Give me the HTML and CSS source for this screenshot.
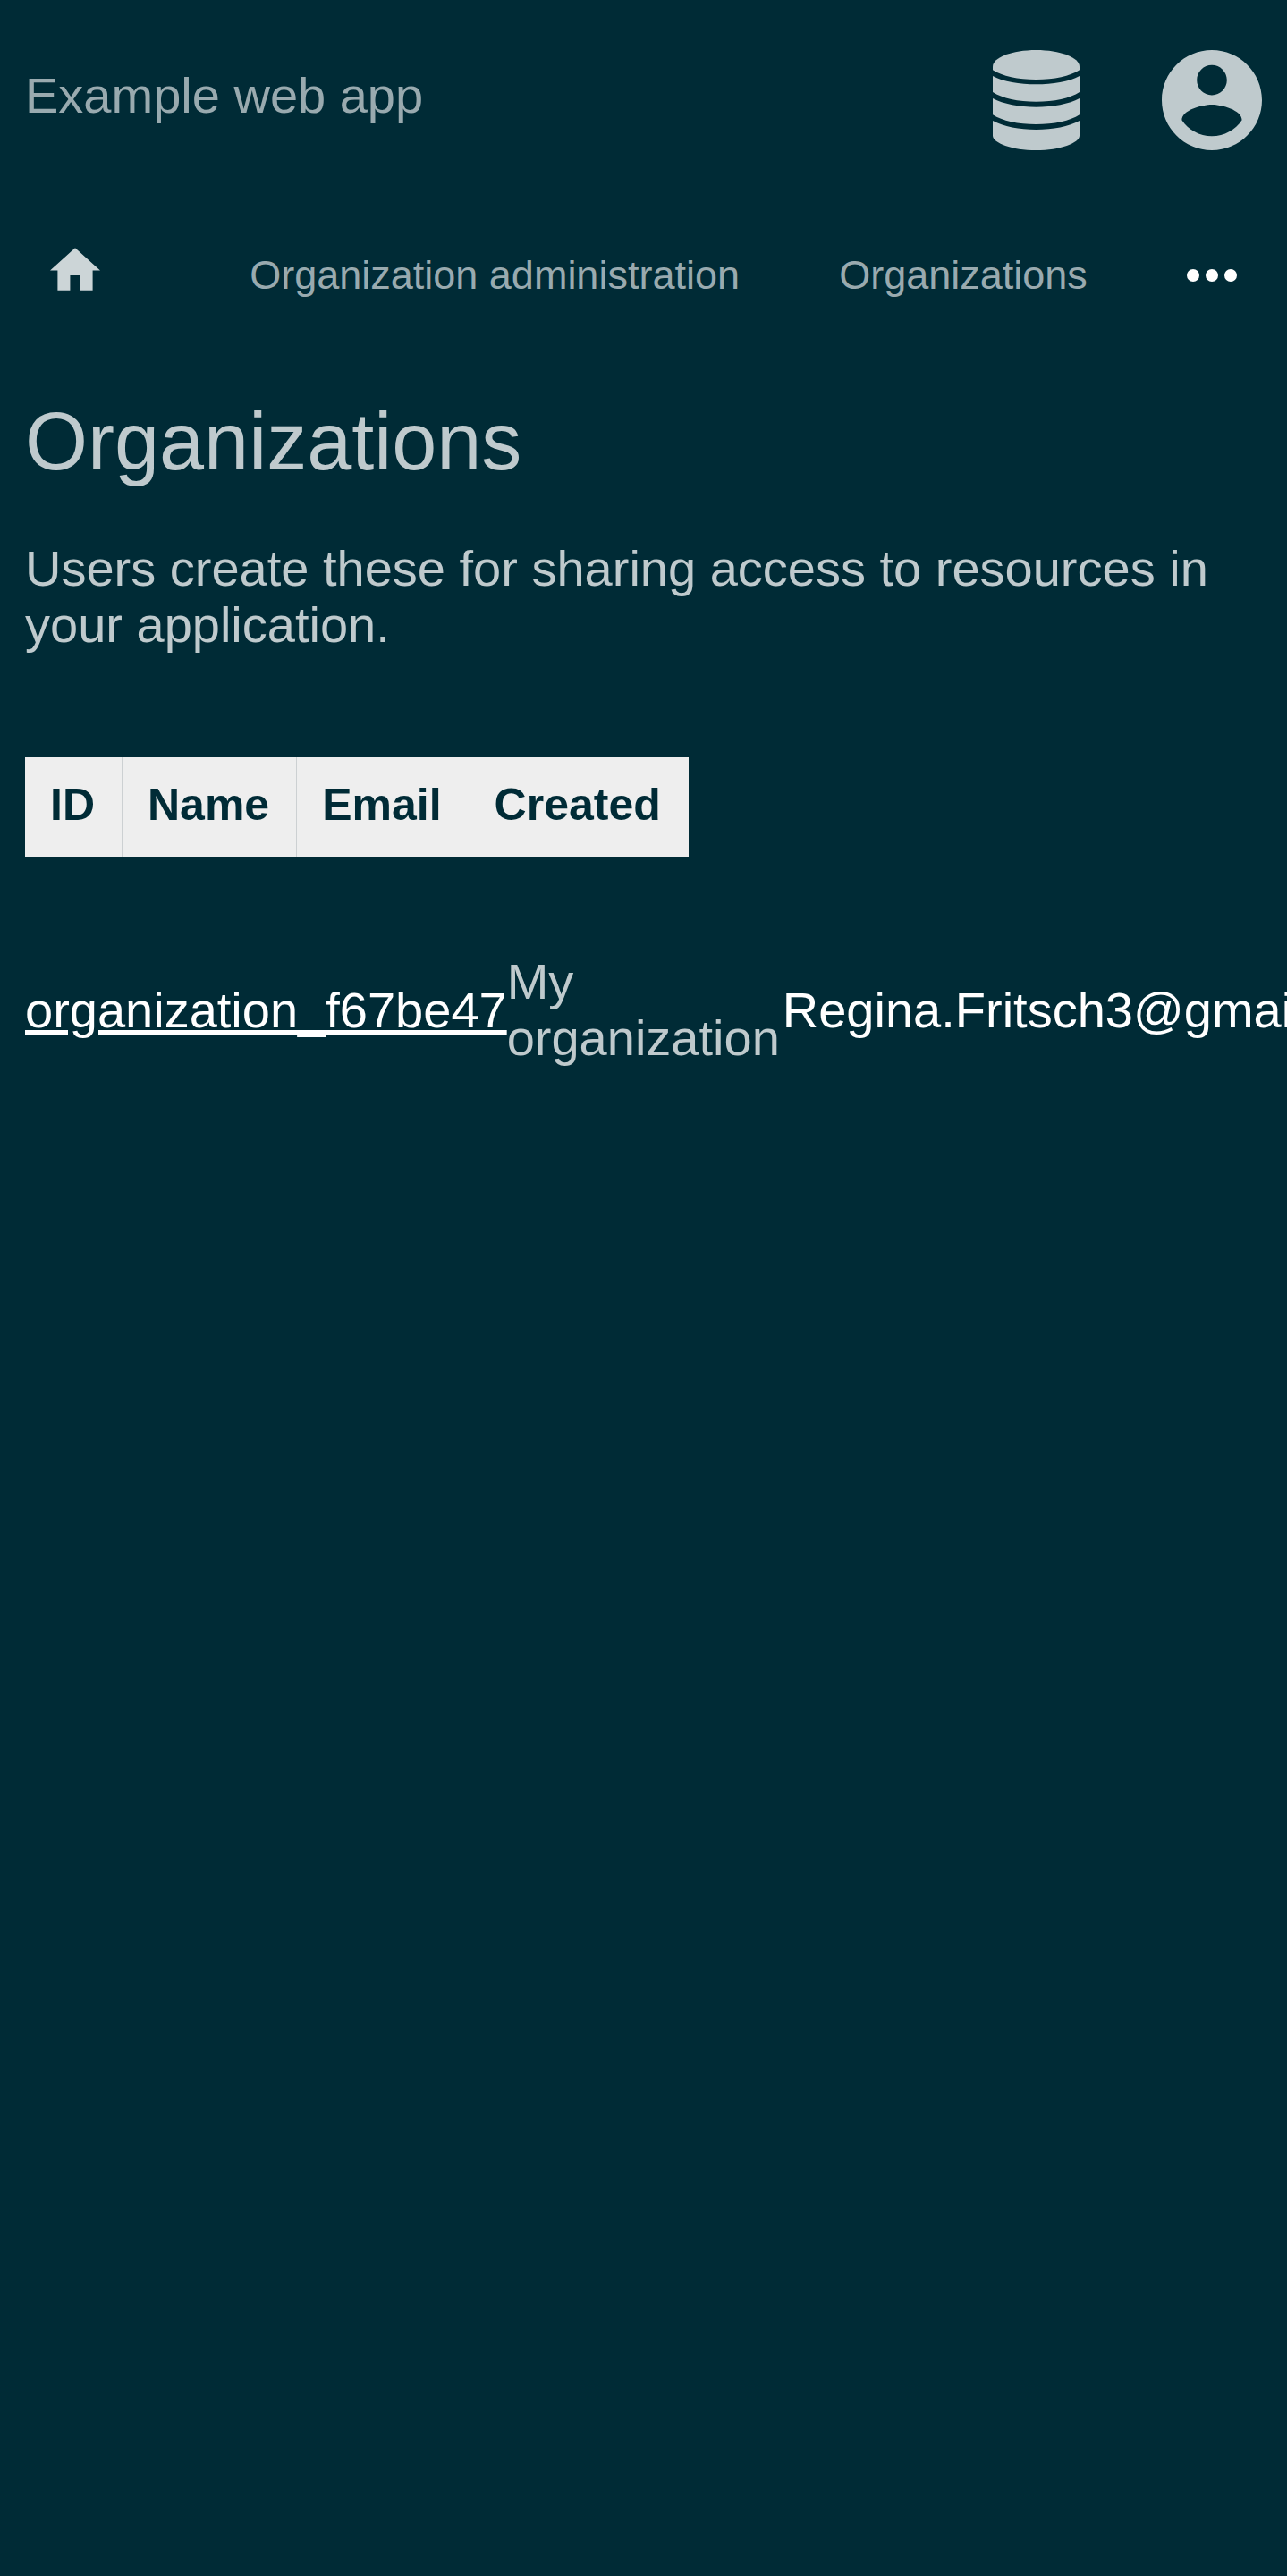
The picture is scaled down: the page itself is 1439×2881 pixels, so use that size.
FILE: index.html
```html
<!DOCTYPE html>
<html lang="en">
<head>
<meta charset="utf-8">
<meta name="viewport" content="width=device-width, initial-scale=1">
<title>Organizations</title>
<link rel="stylesheet" href="styles.css">
</head>
<body>
<header class="header">
  <a class="brand" href="#">Example web app</a>
  <div class="menus">
    <button class="icon-button" type="button" aria-label="Administration">
      <svg class="icon-database" viewBox="0 0 291 336" aria-hidden="true">
        <path d="M0 67V55C0 25 65 0 145.500 0S291 25 291 55V67C260 88 205 99 145.500 99S31 88 0 67Z"/>
        <path d="M0 87C35 106 90 115 145.500 115S256 106 291 87V141C260 162 205 173 145.500 173S31 162 0 141Z"/>
        <path d="M0 162C35 181 90 191 145.500 191S256 181 291 162V217C260 238 205 249 145.500 249S31 238 0 217Z"/>
        <path d="M0 237C35 257 90 267 145.500 267S256 257 291 237V287C291 311 226 336 145.500 336S0 311 0 287Z"/>
      </svg>
    </button>
    <button class="icon-button" type="button" aria-label="Account">
      <svg class="icon-account" viewBox="2 2 20 20" aria-hidden="true">
        <path d="M12 2C6.480 2 2 6.480 2 12s4.480 10 10 10 10-4.480 10-10S17.520 2 12 2zm0 3c1.660 0 3 1.340 3 3s-1.340 3-3 3-3-1.340-3-3 1.340-3 3-3zm0 14.200c-2.500 0-4.710-1.280-6-3.220.03-1.990 4-3.080 6-3.080 1.990 0 5.970 1.090 6 3.080-1.290 1.940-3.500 3.220-6 3.220z"/>
      </svg>
    </button>
  </div>
</header>
<nav class="nav" aria-label="Breadcrumb">
  <a class="nav-home" href="#" aria-label="Home">
    <svg class="icon-home" viewBox="2 3 20 17" aria-hidden="true"><path d="M10 20v-6h4v6h5v-8h3L12 3 2 12h3v8z"/></svg>
  </a>
  <a class="nav-link" href="#">Organization administration</a>
  <a class="nav-link" href="#">Organizations</a>
  <button class="icon-button nav-more" type="button" aria-label="More">
    <svg class="icon-more" viewBox="4 10 16 4" aria-hidden="true"><circle cx="6" cy="12" r="2"/><circle cx="12" cy="12" r="2"/><circle cx="18" cy="12" r="2"/></svg>
  </button>
</nav>
<main class="content">
  <h1 class="title">Organizations</h1>
  <p class="intro">Users create these for sharing access to resources in your application.</p>
  <table class="list">
    <thead class="list-head">
      <tr><th scope="col">ID</th><th scope="col">Name</th><th scope="col">Email</th><th scope="col">Created</th></tr>
    </thead>
    <tbody class="list-body">
      <tr>
        <td><a class="record" href="#">organization_f67be47</a></td>
        <td class="name">My organization</td>
        <td><a class="email" href="#">Regina.Fritsch3@gmail.com</a></td>
      </tr>
    </tbody>
  </table>
</main>
</body>
</html>
```
FILE: styles.css
```css
* {
  box-sizing: border-box;
}

body {
  margin: 0;
  background: #002b36;
  color: #bfcacd;
  font-family: "Liberation Sans", Arial, sans-serif;
  font-size: 56px;
  line-height: 63px;
}

a {
  color: #fff;
}

svg {
  display: block;
  fill: currentColor;
}

.header {
  display: flex;
  align-items: flex-start;
  justify-content: space-between;
  padding: 56px 28px;
}

.brand {
  padding-top: 19px;
  color: #99aaaf;
  text-decoration: none;
}

.menus {
  display: flex;
  gap: 92px;
}

.icon-button {
  margin: 0;
  padding: 0;
  border: 0;
  background: none;
  color: #bfcacd;
}

.icon-database {
  width: 97px;
  height: 112px;
}

.icon-account {
  width: 112px;
  height: 112px;
}

.nav {
  display: flex;
  align-items: center;
  justify-content: space-between;
  padding: 53px 56px 46px;
  font-size: 45px;
  line-height: 56px;
}

.nav-home {
  margin-right: 56px;
  padding-bottom: 14px;
  color: #ccd5d7;
}

.nav-link {
  color: #99aaaf;
  text-decoration: none;
  white-space: nowrap;
}

.nav-more {
  color: #fff;
}

.icon-home {
  width: 56px;
  height: 48px;
}

.icon-more {
  width: 56px;
  height: 14px;
}

.content {
  padding: 53px 28px 56px;
}

.title {
  margin: 0 0 54px;
  font-size: 90px;
  font-weight: 400;
  line-height: 112px;
}

.intro {
  margin: 0;
}

.list {
  display: block;
  margin-top: 117px;
  overflow: hidden;
  margin-right: -28px;
  border-spacing: 0;
}

.list-head,
.list-body {
  display: block;
}

.list-head {
  width: fit-content;
  background: #eee;
  color: #002b36;
  font-size: 50px;
  line-height: 56px;
}

.list-head th {
  padding: 25px 30px 31px 28px;
  border-right: 1px solid #eee;
}

.list-head th:nth-child(-n+2) {
  border-right-color: #ccd0d2;
}

.list-body {
  padding-top: 107px;
}

.list-body td {
  padding: 0;
}

.list-body .name {
  padding-right: 3px;
}

.email {
  text-decoration: none;
}
```
